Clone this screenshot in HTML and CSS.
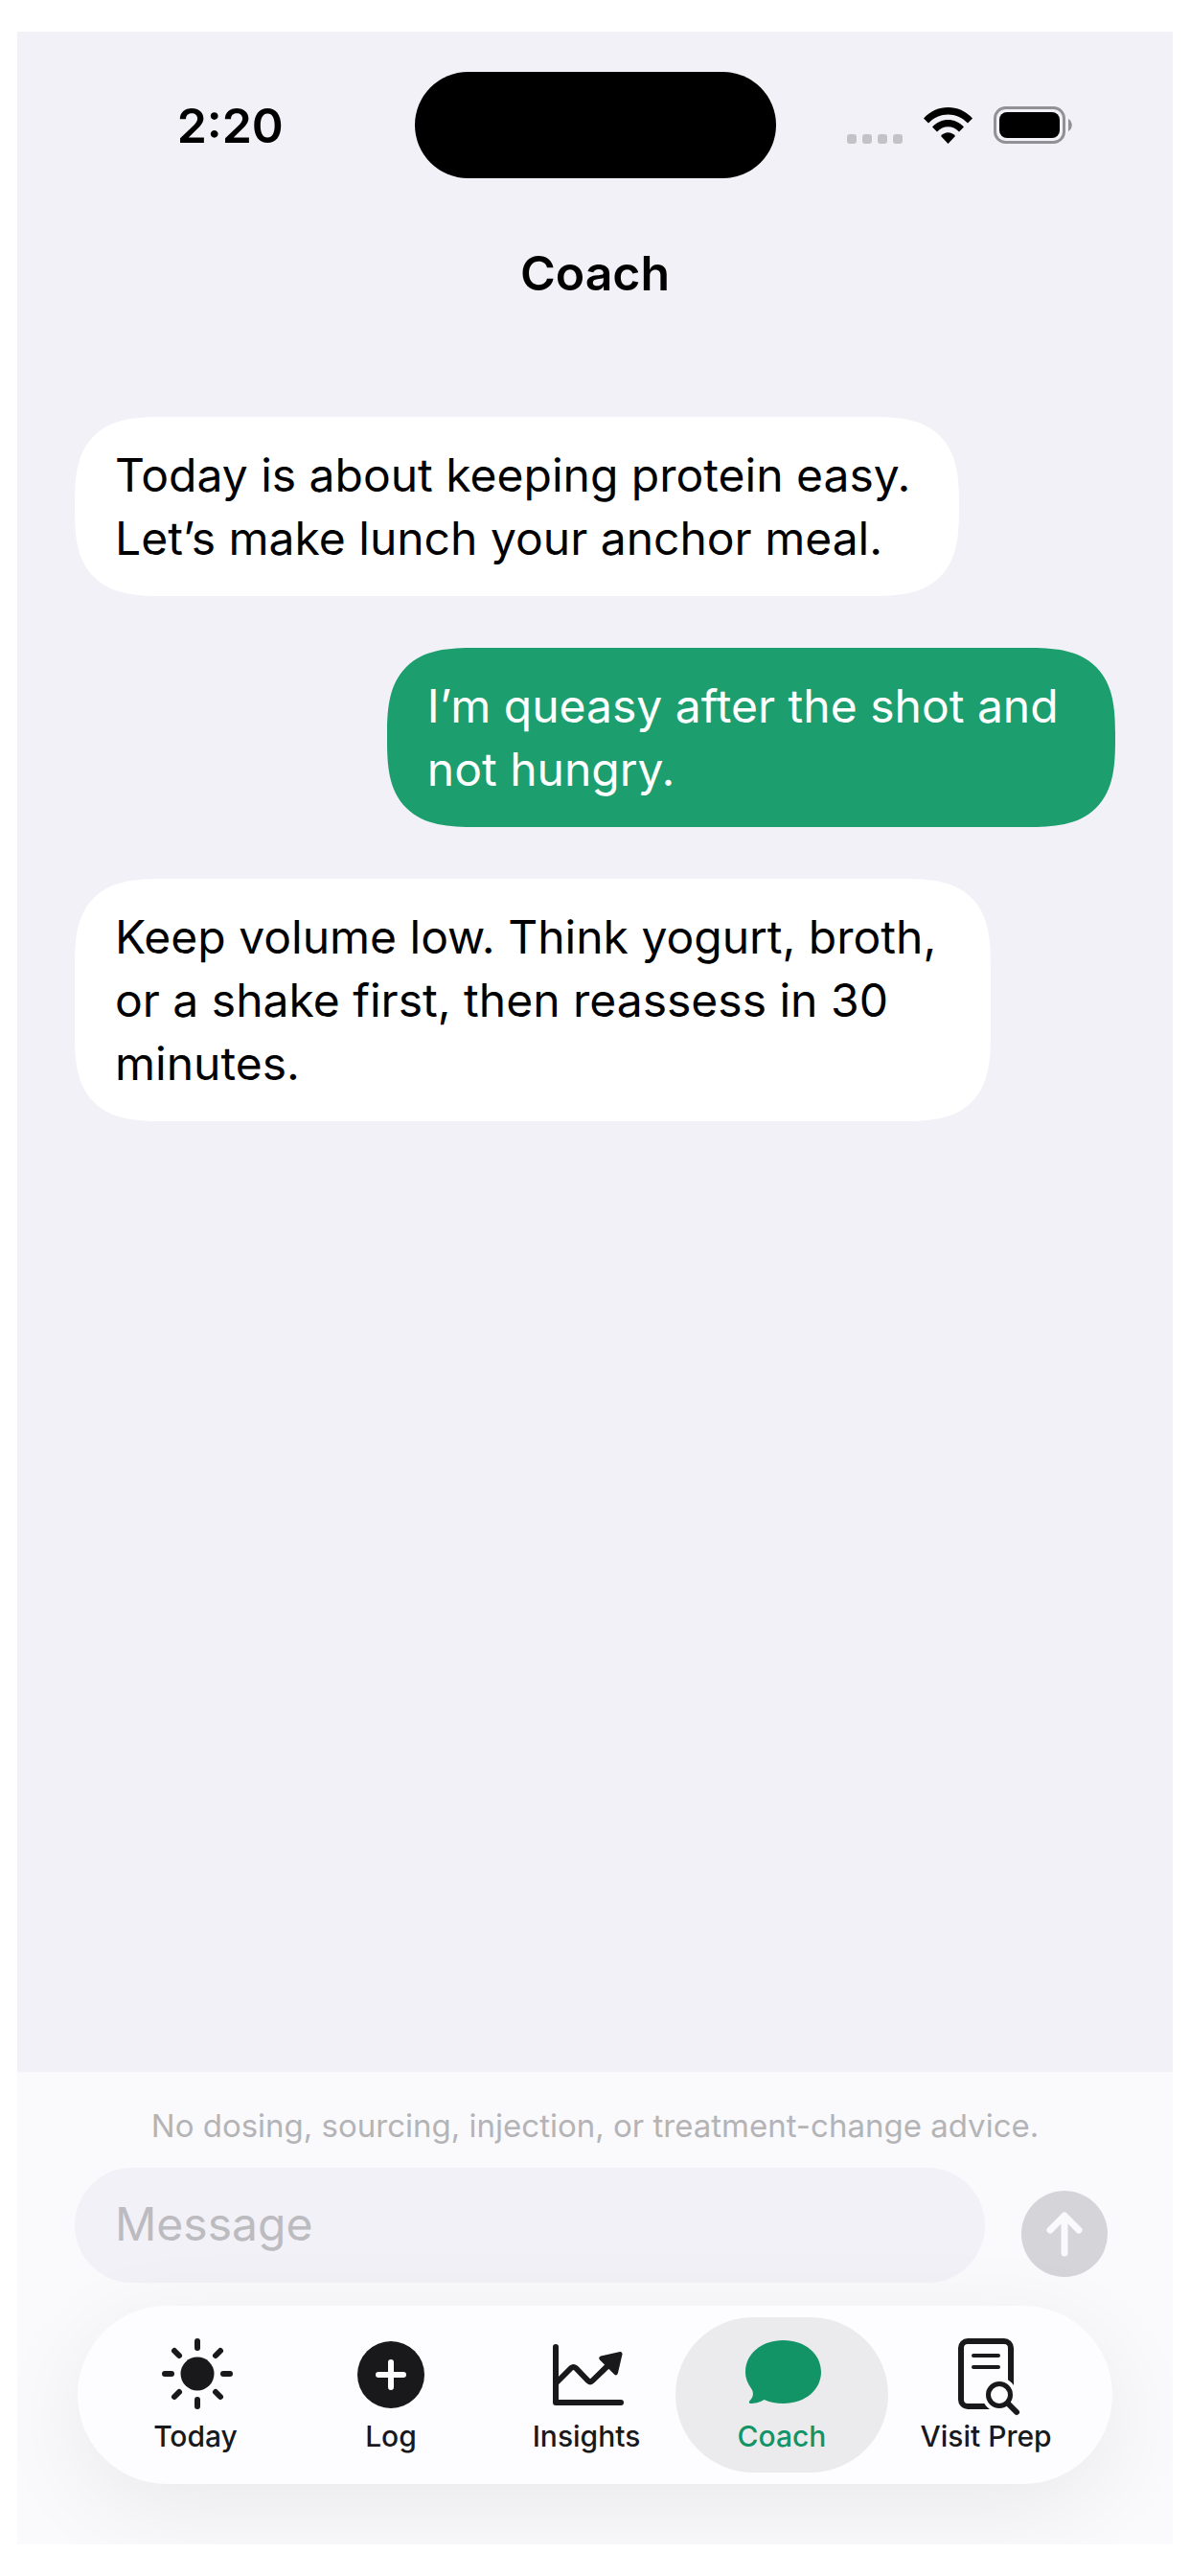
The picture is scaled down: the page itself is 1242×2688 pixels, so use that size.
FILE: index.html
```html
<!DOCTYPE html>
<html lang="en">
<head>
<meta charset="UTF-8">
<meta name="viewport" content="width=device-width, initial-scale=1.0">
<title>Coach</title>
<link rel="stylesheet" href="styles.css">
</head>
<body>

<div class="phone">
    <div class="status-bar">
        <span class="time">2:20</span>
        <div class="island"></div>
        <div class="status-icons">
            <svg class="signal" viewBox="0 0 58 38" width="58" height="38">
                <rect x="0" y="28" width="10" height="10" rx="3"/>
                <rect x="16" y="28" width="10" height="10" rx="3"/>
                <rect x="32" y="28" width="10" height="10" rx="3"/>
                <rect x="48" y="28" width="10" height="10" rx="3"/>
            </svg>
            <svg class="wifi" viewBox="0 0 51 38" width="51" height="38">
                <path d="M0 11.500C14-3.800 37-3.800 51 11.500L46 16.500C34.500 4.500 16.500 4.500 5 16.500Z"/>
                <path d="M9 20.500C18 10.500 33 10.500 42 20.500L37 25.500C30.500 18.500 20.500 18.500 14 25.500Z"/>
                <path d="M18 30C22 25 29 25 33 30L25.500 38Z"/>
            </svg>
            <svg class="battery" viewBox="0 0 82 40" width="82" height="40">
                <rect class="battery-case" x="1.500" y="1.500" width="72" height="36" rx="11"/>
                <rect x="6" y="6" width="63" height="27" rx="8"/>
                <path class="battery-tip" d="M78 13C83 16 83 23 78 26Z"/>
            </svg>
        </div>
    </div>

    <header class="header">
        <h1>Coach</h1>
    </header>

    <main class="chat">
        <p class="bubble bubble-short">Today is about keeping protein easy. Let’s make lunch your anchor meal.</p>
        <p class="bubble bubble-user">I’m queasy after the shot and not hungry.</p>
        <p class="bubble">Keep volume low. Think yogurt, broth, or a shake first, then reassess in 30 minutes.</p>
    </main>

    <div class="bottom">
        <p class="disclaimer">No dosing, sourcing, injection, or treatment-change advice.</p>
        <form class="composer">
            <input type="text" class="message-input" placeholder="Message" aria-label="Message">
            <button class="send-btn" type="button" aria-label="Send">
                <svg viewBox="0 0 90 90" width="90" height="90">
                    <path d="M45 65V26M30 41L45 26L60 41"/>
                </svg>
            </button>
        </form>
        <nav class="tab-bar">
            <a class="tab" href="#today">
                <svg viewBox="0 0 84 76" width="84" height="76">
                    <circle cx="44" cy="37" r="17.500"/>
                    <path class="line" d="M44 10V3M44 64V71M17 37H10M71 37H78M25 18L20 13M63 18L68 13M25 56L20 61M63 56L68 61"/>
                </svg>
                <span>Today</span>
            </a>
            <a class="tab" href="#log">
                <svg viewBox="0 0 84 76" width="84" height="76">
                    <circle cx="42" cy="38" r="35"/>
                    <path class="line cutout" d="M42 25V51M29 38H55"/>
                </svg>
                <span>Log</span>
            </a>
            <a class="tab" href="#insights">
                <svg viewBox="0 0 84 76" width="84" height="76">
                    <path class="line" d="M10 9V67H78M11 46L26 31Q28.500 29 31 31L43.500 44Q46 46.500 48.500 44L66 27"/>
                    <path d="M77 14L57 18.500Q54 20 56 22.500L71 37.500Q74 40 75 36L79.500 16.500Q79.500 13.500 77 14Z"/>
                </svg>
                <span>Insights</span>
            </a>
            <a class="tab active" href="#coach" aria-current="page">
                <svg viewBox="0 0 84 76" width="84" height="76">
                    <path d="M43.500 2C66 2 83 16 83 35C83 54 66 68 43.500 68C36 68 29 66.500 23.500 64C19 67 13 68 9.500 68C7.500 68 7.500 66 8.500 65C12 62 13 57 10.500 53C6.500 47 4 42 4 35C4 16 21 2 43.500 2Z"/>
                </svg>
                <span>Coach</span>
            </a>
            <a class="tab" href="#visit-prep">
                <svg viewBox="0 0 84 76" width="84" height="76">
                    <rect class="line" x="16" y="3" width="52" height="68" rx="7"/>
                    <path class="line thin" d="M29 18H55M29 30H55"/>
                    <circle class="halo" cx="56" cy="59" r="18"/>
                    <circle class="line lens" cx="56" cy="59" r="11.500"/>
                    <path class="line handle" d="M65 68L74 77"/>
                </svg>
                <span>Visit Prep</span>
            </a>
        </nav>
    </div>
</div>

</body>
</html>
```
FILE: styles.css
```css
* {
    box-sizing: border-box;
}

body {
    margin: 0;
    padding: 33px 18px;
    min-height: 100vh;
    display: flex;
    background-color: #fff;
    color: #000;
    font-family: Inter, "Liberation Sans", sans-serif;
}

h1,
p {
    margin: 0;
}

.phone {
    flex: 1;
    min-width: 0;
    display: flex;
    flex-direction: column;
    background-color: #f2f1f7;
    overflow: hidden;
}

.status-bar {
    display: grid;
    grid-template-columns: 1fr 377px 1fr;
    align-items: center;
    padding-top: 42px;
}

.time {
    padding-left: 30px;
    text-align: center;
    font-size: 50px;
    font-weight: 600;
}

.island {
    height: 111px;
    background-color: #000;
    border-radius: 56px;
}

.status-icons {
    display: flex;
    justify-content: center;
    align-items: center;
    gap: 22px;
    padding-right: 30px;
}

.signal {
    fill: #c3c3c7;
}

.battery-case {
    fill: none;
    stroke: #929296;
    stroke-width: 3;
}

.battery-tip {
    fill: #929296;
}

.header {
    padding: 66px 60px 0;
    text-align: center;
}

.header h1 {
    font-size: 50px;
    line-height: 66px;
    font-weight: 600;
}

.chat {
    flex: 1;
    display: flex;
    flex-direction: column;
    align-items: flex-start;
    gap: 54px;
    padding: 117px 60px 54px;
}

.bubble {
    width: 88%;
    padding: 28px 42px 27px;
    border-radius: 66px;
    background-color: #fff;
    font-size: 48px;
    line-height: 66px;
}

.bubble-short {
    width: 85%;
}

.bubble-user {
    width: 70%;
    align-self: flex-end;
    background-color: #1c9e6f;
    color: #fff;
}

.bottom {
    display: flex;
    flex-direction: column;
    gap: 24px;
    padding: 36px 60px 63px;
    background-color: #fafafd;
}

.disclaimer {
    text-align: center;
    font-size: 33px;
    line-height: 40px;
    color: #b4b4b7;
}

.composer {
    display: flex;
    align-items: flex-end;
    gap: 38px;
    padding-right: 8px;
}

.message-input {
    flex: 1;
    min-width: 0;
    height: 120px;
    padding: 0 42px 4px;
    border: none;
    border-radius: 60px;
    background-color: #f2f1f7;
    font-family: inherit;
    font-size: 48px;
    color: #000;
}

.message-input::placeholder {
    color: #bcbbc0;
}

.send-btn {
    width: 90px;
    height: 90px;
    margin-bottom: 6px;
    padding: 0;
    border: none;
    border-radius: 50%;
    background-color: #d5d4d9;
    cursor: pointer;
}

.send-btn svg {
    display: block;
    fill: none;
    stroke: #fafafd;
    stroke-width: 7;
    stroke-linecap: round;
    stroke-linejoin: round;
}

.tab-bar {
    display: grid;
    grid-template-columns: repeat(4, 204fr) 222fr;
    margin: 0 3px;
    padding: 12px 21px;
    border-radius: 93px;
    background-color: #fdfdff;
    box-shadow: 0 24px 100px rgba(0, 0, 0, 0.07);
}

.tab {
    display: flex;
    flex-direction: column;
    align-items: center;
    gap: 8px;
    padding: 22px 0 20px;
    color: #19191b;
    font-size: 30px;
    line-height: 36px;
    font-weight: 500;
    text-decoration: none;
    white-space: nowrap;
}

.tab svg {
    fill: currentColor;
    overflow: visible;
}

/* the selected pill is a bit wider than its column */
.tab.active {
    margin: 0 -9px;
    border-radius: 81px;
    background-color: #ebebed;
    color: #129466;
}

.tab .line {
    fill: none;
    stroke: currentColor;
    stroke-width: 6;
    stroke-linecap: round;
    stroke-linejoin: round;
}

.tab .cutout {
    stroke: #fdfdff;
}

.tab .thin {
    stroke-width: 4;
}

.tab .halo {
    fill: #fdfdff;
}

.tab .lens {
    stroke-width: 5;
}

/* squarer corners where the browser can draw them */
@supports (corner-shape: squircle) {
    .bubble {
        border-radius: 92px;
        corner-shape: superellipse(1.5);
    }
}
```
